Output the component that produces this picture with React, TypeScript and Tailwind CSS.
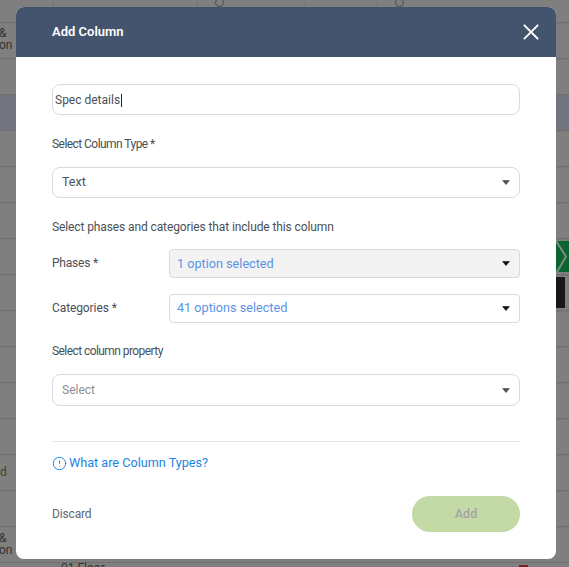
import { CircleAlert } from "lucide-react";

const rows = Array.from({ length: 15 }, (_, i) => i);

function Caret({ dark }: { dark?: boolean }) {
  return (
    <svg width="8" height="5" viewBox="0 0 8 5" className="shrink-0">
      <path d="M0.6 0.5H7.4L4 4.6Z" fill={dark ? "#111111" : "#495057"} stroke={dark ? "#111111" : "#495057"} strokeWidth="0.6" strokeLinejoin="round" />
    </svg>
  );
}

function SelectBox({ text, className, textClass, dark }: { text: string; className: string; textClass: string; dark?: boolean }) {
  return (
    <div className={`flex items-center justify-between border border-[#d9d9de] ${className}`}>
      <span className={textClass}>{text}</span>
      <Caret dark={dark} />
    </div>
  );
}

function BgRow({ i }: { i: number }) {
  const tint = i === 2;
  return (
    <div className={`flex h-[36px] shrink-0 border-b border-[#6f6f72] ${tint ? "bg-[#72757d]" : ""}`}>
      <div className="w-[53px]" />
      <div className="w-[144px] border-l border-[#747474]" />
      <div className="w-[108px] border-l border-[#747474]" />
      <div className="w-[72px] border-l border-[#747474]" />
      <div className="w-[108px] border-l border-[#747474]" />
      <div className="flex-1 border-l border-[#747474] border-t border-dashed" />
    </div>
  );
}

export default function App() {
  return (
    <div className="relative h-[567px] w-[569px] overflow-hidden bg-[#7f7f7f] font-['Roboto',sans-serif]">
      <div className="flex h-[23px] border-b border-[#6f6f72]">
        <div className="w-[53px]" />
        <div className="w-[144px] border-l border-[#747474]" />
        <div className="w-[108px] border-l border-[#747474] pl-[17px]">
          <div className="-mt-[2px] h-[9px] w-[9px] rounded-full border border-[#4a4a4a]" />
        </div>
        <div className="w-[72px] border-l border-[#747474]" />
        <div className="w-[108px] border-l border-[#747474] pl-[17px]">
          <div className="-mt-[2px] h-[9px] w-[9px] rounded-full border border-[#4a4a4a]" />
        </div>
      </div>
      {rows.map((i) => (
        <BgRow key={i} i={i} />
      ))}

      {/* Items over the table */}
      <div className="absolute left-0 top-[27px] text-[12px] leading-[12px] text-[#333333]">
        <div className="-ml-[1px]">&amp;</div>
        <div className="-ml-[1px]">on</div>
      </div>
      <div className="absolute left-0 top-[532px] text-[12px] leading-[12px] text-[#333333]">
        <div className="-ml-[1px]">&amp;</div>
        <div className="-ml-[1px]">on</div>
      </div>
      <div className="absolute left-0 top-[466px] text-[12px] leading-[12px] text-[#2f4a35]">d</div>
      <div className="absolute left-[61px] top-[561px] text-[12px] leading-[14px] text-[#333333]">01 Floor</div>
      <div className="absolute left-[519px] top-[565px] h-[2px] w-[9px] bg-[#7a1f1f]" />
      <div className="absolute left-[556px] top-[241px] h-[31px] w-[13px] bg-[#0a6432]">
        <svg width="13" height="31" viewBox="0 0 13 31">
          <path d="M0 0L10 15.5L1 31" fill="none" stroke="#7d8b81" strokeWidth="2" />
        </svg>
      </div>
      <div className="absolute left-[556px] top-[277px] h-[31px] w-[9px] bg-[#17181c]" />

      {/* Modal */}
      <div className="absolute left-[16px] top-[7px] flex h-[552px] w-[540px] flex-col overflow-hidden rounded-[8px] bg-white">
        <div className="flex h-[50px] shrink-0 items-center justify-between bg-[#44546f] pb-[1px] pl-[36px] pr-[17px]">
          <span className="text-[13px] font-semibold text-white">Add Column</span>
          <svg width="16" height="16" viewBox="0 0 16 16">
            <path d="M1.5 1.5L14.5 14.5M14.5 1.5L1.5 14.5" stroke="#ffffff" strokeWidth="1.8" strokeLinecap="square" />
          </svg>
        </div>
        <div className="flex flex-1 flex-col px-[36px] pt-[27px]">
          <div className="flex h-[31px] items-center rounded-[8px] border border-[#d9d9e2] pl-[2px] pt-[1px] text-[12px] text-[#495057]">
            <span>Spec details</span>
            <span className="ml-px h-[13px] w-px bg-[#222222]" />
          </div>

          <div className="mt-[19px] h-[20px] text-[12px] leading-[20px] tracking-[-0.55px] text-[#495057]">Select Column Type *</div>
          <SelectBox
            text="Text"
            className="mt-[13px] h-[31px] rounded-[8px] pl-[9px] pr-[9px]"
            textClass="text-[12.5px] text-[#495057]"
          />

          <div className="mt-[19px] h-[20px] text-[12px] leading-[20px] tracking-[-0.11px] text-[#495057]">Select phases and categories that include this column</div>

          <div className="mt-[12px] flex items-center">
            <div className="-mt-[2px] w-[117px] text-[12px] tracking-[-0.2px] text-[#495057]">Phases *</div>
            <SelectBox
              text="1 option selected"
              className="h-[29px] flex-1 rounded-[4px] bg-[#f3f3f3] pl-[7px] pr-[9px]"
              textClass="pt-[1px] text-[12.65px] text-[#5b92e5]"
              dark
            />
          </div>
          <div className="mt-[16px] flex items-center">
            <div className="-mt-[2px] w-[117px] text-[12px] tracking-[-0.1px] text-[#495057]">Categories *</div>
            <SelectBox
              text="41 options selected"
              className="h-[29px] flex-1 rounded-[4px] pl-[7px] pr-[9px]"
              textClass="text-[12.65px] text-[#5b92e5]"
              dark
            />
          </div>

          <div className="mt-[18px] h-[20px] text-[12px] leading-[20px] tracking-[-0.57px] text-[#495057]">Select column property</div>
          <SelectBox
            text="Select"
            className="mt-[13px] h-[32px] rounded-[8px] pl-[9px] pr-[9px]"
            textClass="text-[12px] text-[#8f8f8f]"
          />

          <div className="mt-[35px] h-px shrink-0 bg-[#e6e6e6]" />

          <div className="mt-[11px] flex h-[20px] items-center gap-[2px] text-[12.65px] text-[#1a84e6]">
            <CircleAlert size={15} strokeWidth={1.5} />
            <span>What are Column Types?</span>
          </div>

          <div className="mt-[23px] flex items-center justify-between">
            <span className="text-[12px] tracking-[-0.15px] text-[#5f6570]">Discard</span>
            <button className="h-[36px] w-[108px] rounded-full bg-[#c3d9a6] text-[12.5px] font-medium text-[#a3a3a3]">Add</button>
          </div>
        </div>
      </div>
    </div>
  );
}
